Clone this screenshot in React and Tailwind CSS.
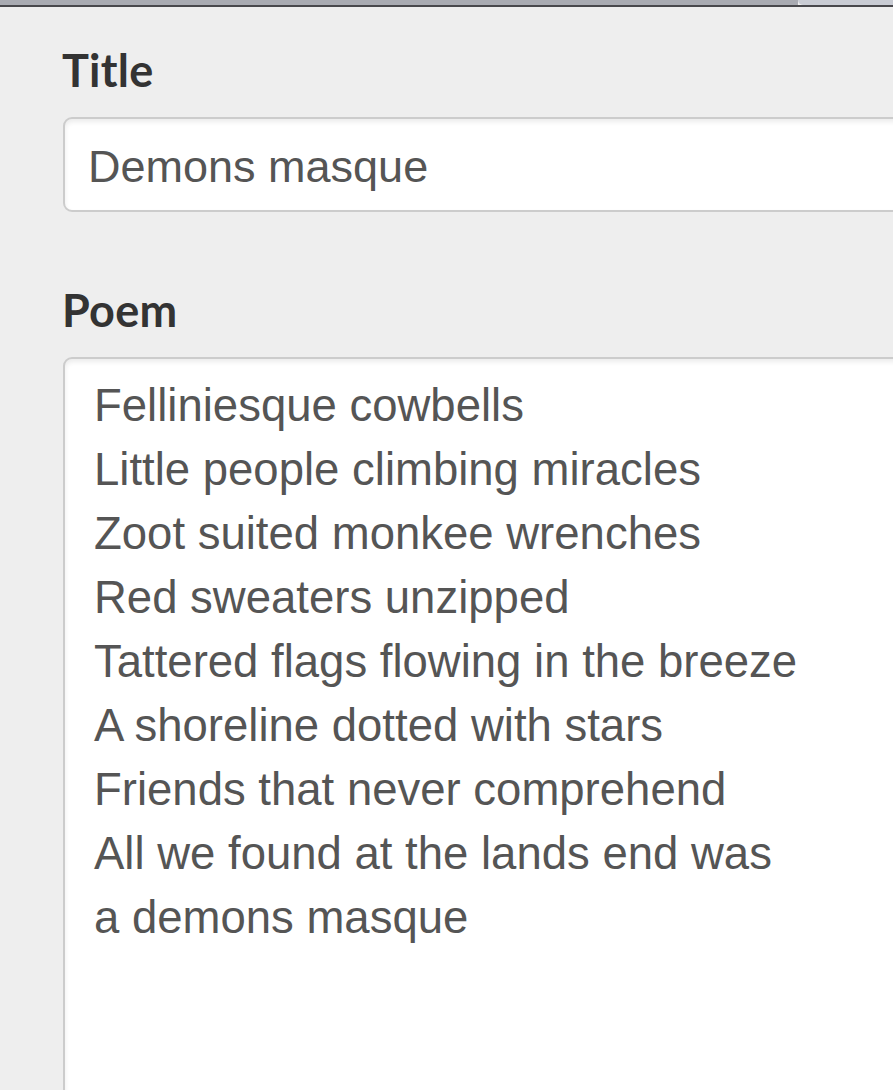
import React from 'react';

const poemLines = [
  'Felliniesque cowbells',
  'Little people climbing miracles',
  'Zoot suited monkee wrenches',
  'Red sweaters unzipped',
  'Tattered flags flowing in the breeze',
  'A shoreline dotted with stars',
  'Friends that never comprehend',
  'All we found at the lands end was',
  'a demons masque',
];

const labelClass =
  "block font-['Lato',sans-serif] font-bold text-[45px] leading-[64px] text-[#333333] tracking-[0.3px]";

export default function App() {
  return (
    <div className="w-[893px] h-[1090px] overflow-hidden bg-[#eeeeee]">
      {/* window chrome strip */}
      <div className="flex h-[5px]">
        <div className="flex-1 bg-[#a9abb2]" />
        <div className="w-[95px] bg-[#c9ccd4] rounded-bl-[6px]" />
      </div>
      <div className="h-[2px] bg-[#48484c]" />

      <form className="pl-[62px] pt-[31px]">
        <label className={labelClass}>Title</label>
        <input
          type="text"
          readOnly
          defaultValue="Demons masque"
          className="mt-[15px] ml-px block w-[1000px] h-[95px] pl-[23px] pt-[5px] pb-0 bg-white border-2 border-[#cccccc] rounded-[9px] shadow-[inset_0_3px_5px_rgba(0,0,0,0.08)] font-['Liberation_Sans',Arial,sans-serif] text-[45px] text-[#555555] outline-none"
        />

        <label className={`${labelClass} mt-[66px]`}>Poem</label>
        <textarea
          readOnly
          defaultValue={poemLines.join('\n')}
          className="mt-[15px] ml-px block w-[1000px] h-[800px] pl-[29px] pt-[15px] bg-white border-2 border-[#cccccc] rounded-[9px] shadow-[inset_0_3px_5px_rgba(0,0,0,0.08)] font-['Liberation_Sans',Arial,sans-serif] text-[45.5px] leading-[64px] text-[#555555] outline-none resize-none overflow-hidden"
        />
      </form>
    </div>
  );
}
